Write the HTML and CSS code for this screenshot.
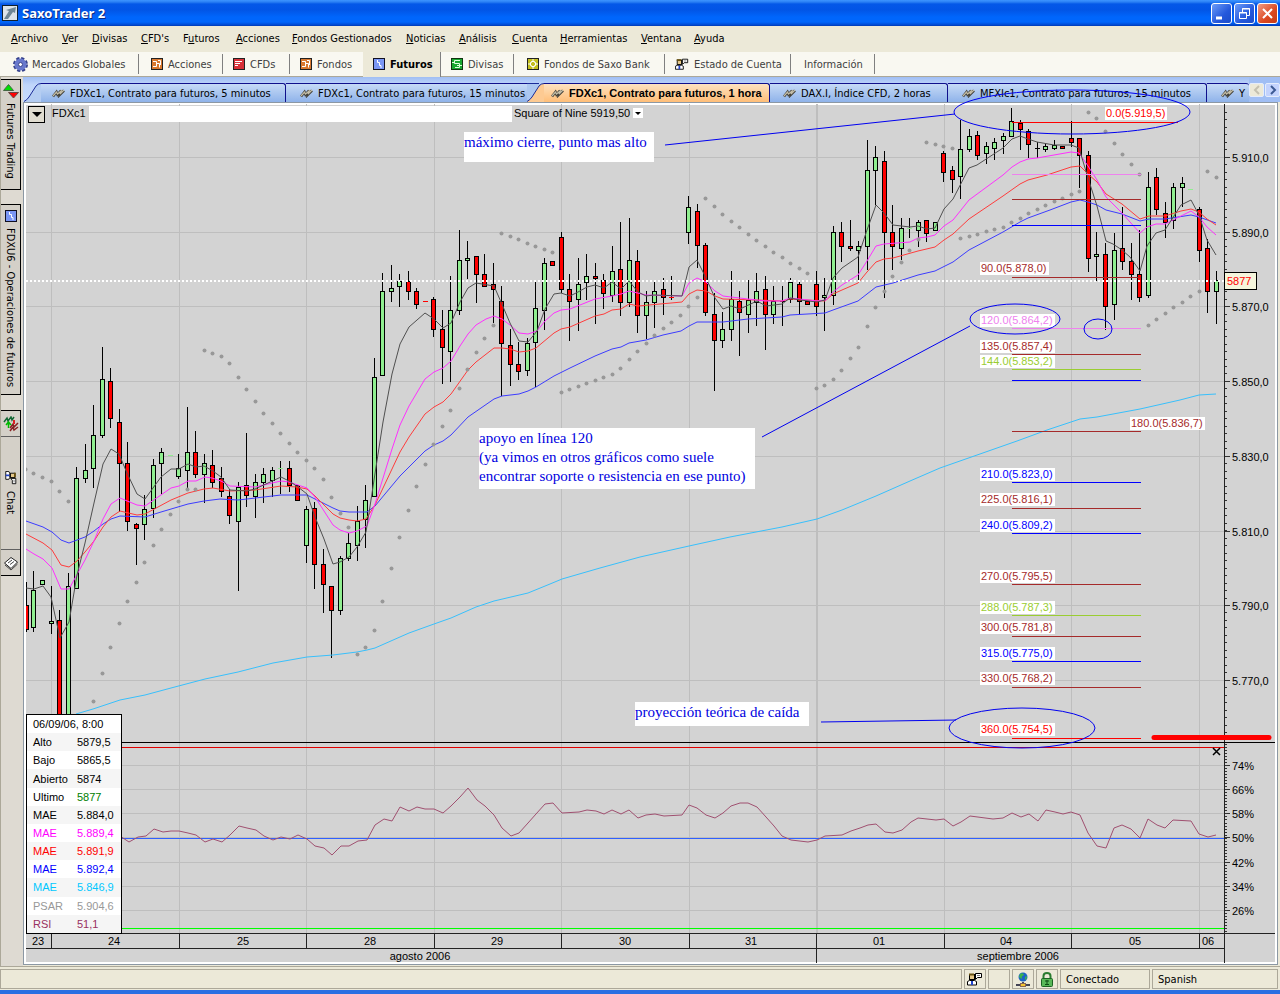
FILE: index.html
```
<!DOCTYPE html>
<html lang="es">
<head>
    <meta charset="UTF-8">
    <meta name="viewport" content="width=device-width, initial-scale=1.0">
    <title>SaxoTrader 2</title>
    <link rel="stylesheet" href="styles.css">
</head>
<body>
    <!-- Iconos compartidos -->
    <svg class="sprite" aria-hidden="true">
        <symbol id="i-chart" viewBox="0 0 13 9">
            <path d="M1 7.500L4.500 3L5.500 5.500L9 1.500L8 5.500L12 1.500" fill="none" stroke="#44423a" stroke-width="2.600"/>
            <path d="M1 7L4.500 3L5.500 5L9 2L8 5L12 1" fill="none" stroke="#c4bea8" stroke-width="1.200"/>
        </symbol>
        <symbol id="i-stock" viewBox="0 0 12 12">
            <rect x=".5" y=".5" width="11" height="11" fill="#d87830" stroke="#222"/>
            <path d="M2 3.500H5.500V8.500H2M5.500 5.500H8.500V9.500M7 2.500H9.500V7" fill="none" stroke="#fff"/>
        </symbol>
        <symbol id="i-future" viewBox="0 0 12 12">
            <rect x=".5" y=".5" width="11" height="11" fill="#7a96f4" stroke="#112"/>
            <path d="M4.500 2V4.500H6.500V7.500H8V10" fill="none" stroke="#fff"/>
        </symbol>
        <symbol id="i-person" viewBox="0 0 16 14">
            <path d="M8.500 1.500H14.500V5.500H10.500L8.500 7.500Z" fill="#fff" stroke="#000"/>
            <path d="M10 3.500H13" stroke="#777"/>
            <rect x="2.500" y="2.500" width="5" height="5" fill="#e6c98a" stroke="#000"/>
            <path d="M2 2.500H7" stroke="#6b5310" stroke-width="2"/>
            <path d="M.5 13V9.500L2.500 8.500H7.500L9.500 9.500V13Z" fill="#fff" stroke="#000"/>
            <path d="M5 9V13" stroke="#24c" stroke-width="2"/>
        </symbol>
    </svg>

    <header class="titlebar">
        <svg class="app-icon" viewBox="0 0 16 16">
            <rect x=".5" y=".5" width="15" height="15" fill="#dce4ea" stroke="#10202c"/>
            <path d="M2 14L7 6L4 5L14 2L13 8L11 7L6 14Z" fill="#6f8796"/>
        </svg>
        <h1>SaxoTrader 2</h1>
        <div class="win-buttons">
            <button class="win-btn" aria-label="Minimizar"><svg viewBox="0 0 19 19"><path d="M4 14H10" stroke="#fff" stroke-width="3"/></svg></button>
            <button class="win-btn" aria-label="Restaurar"><svg viewBox="0 0 19 19"><path d="M7.500 8V4.500H14.500V11.500H12M7 5H15" fill="none" stroke="#fff"/><path d="M4.500 8.500H11.500V14.500H4.500ZM4 9H12" fill="none" stroke="#fff"/></svg></button>
            <button class="win-btn win-close" aria-label="Cerrar"><svg viewBox="0 0 19 19"><path d="M5 5L14 14M14 5L5 14" stroke="#fff" stroke-width="2"/></svg></button>
        </div>
    </header>

    <nav class="menu" aria-label="Menú">
        <button><u>A</u>rchivo</button>
        <button><u>V</u>er</button>
        <button><u>D</u>ivisas</button>
        <button><u>C</u>FD's</button>
        <button>F<u>u</u>turos</button>
        <button><u>A</u>cciones</button>
        <button><u>F</u>ondos Gestionados</button>
        <button><u>N</u>oticias</button>
        <button><u>A</u>nálisis</button>
        <button><u>C</u>uenta</button>
        <button><u>H</u>erramientas</button>
        <button><u>V</u>entana</button>
        <button><u>A</u>yuda</button>
    </nav>

    <nav class="toolbar" aria-label="Módulos">
        <button>
            <svg width="15" height="15" viewBox="0 0 15 15">
                <circle cx="7.500" cy="7.500" r="6" fill="none" stroke="#34408c" stroke-width="3" stroke-dasharray="3 1.700"/>
                <circle cx="7.500" cy="7.500" r="4" fill="#e4e8fa" stroke="#6878cc" stroke-width="4"/>
                <circle cx="7.500" cy="7.500" r="2" fill="#fff" stroke="#34408c"/>
            </svg>Mercados Globales</button>
        <button><svg width="12" height="12"><use href="#i-stock"/></svg>Acciones</button>
        <button>
            <svg width="12" height="12" viewBox="0 0 12 12">
                <rect x=".5" y=".5" width="11" height="11" fill="#d83038" stroke="#222"/>
                <path d="M2 3.500H9M2 5.500H7M2 7.500H5" stroke="#fff"/>
            </svg>CFDs</button>
        <button><svg width="12" height="12"><use href="#i-stock"/></svg>Fondos</button>
        <button class="active"><svg width="12" height="12"><use href="#i-future"/></svg>Futuros</button>
        <button>
            <svg width="12" height="12" viewBox="0 0 12 12">
                <rect x=".5" y=".5" width="11" height="11" fill="#18a830" stroke="#131"/>
                <path d="M9 2.500H3.500V5.500H8.500V9.500H4M1 4.500H3M6 7.500H11" fill="none" stroke="#dfd"/>
            </svg>Divisas</button>
        <button>
            <svg width="12" height="12" viewBox="0 0 12 12">
                <rect x=".5" y=".5" width="11" height="11" fill="#c4c020" stroke="#222"/>
                <path d="M4.500 3.500H7.500V4.500H8.500V7.500H7.500V8.500H4.500V7.500H3.500V4.500H4.500ZM6 1V3M6 9V11M1 6H3M9 6H11" fill="none" stroke="#fff"/>
            </svg>Fondos de Saxo Bank</button>
        <button><svg width="14" height="14"><use href="#i-person"/></svg>Estado de Cuenta</button>
        <button>Información</button>
    </nav>

    <div class="workspace">
        <aside class="sidebar">
            <button class="side-tab side-trading">
                <svg width="16" height="16" viewBox="0 0 16 16">
                    <path d="M.5 7.500L5.500 1.500L10.500 7.500Z" fill="#00e000" stroke="#464"/>
                    <path d="M5.500 9.500L10.500 15L15.500 9.500Z" fill="#f00" stroke="#644"/>
                </svg>Futures Trading</button>
            <button class="side-tab side-orders"><svg width="12" height="12"><use href="#i-future"/></svg>FDXU6 - Operaciones de futuros</button>
            <div class="side-group">
                <button class="side-part side-signals" aria-label="Señales">
                    <svg width="16" height="16" viewBox="0 0 16 16">
                        <path d="M1 6L4 2L5 5L8 1L9 4L11 1" fill="none" stroke="#163" stroke-width="1.500"/>
                        <path d="M7 12L10 8L11 11L15 7M7 15L10 11L11 14L15 11" fill="none" stroke="#822" stroke-width="1.500"/>
                        <path d="M5.500 12V6M3 9L5.500 6L8 9" fill="none" stroke="#0b0" stroke-width="1.500"/>
                        <path d="M11 4V8" stroke="#d22" stroke-width="2"/>
                    </svg>
                </button>
                <button class="side-part side-chat"><svg class="turned" width="14" height="14"><use href="#i-person"/></svg>Chat</button>
                <button class="side-part side-news" aria-label="Noticias">
                    <svg width="16" height="16" viewBox="0 0 16 16">
                        <path d="M1.500 8L8 2.500L14.500 7L8 13.500Z" fill="#fff" stroke="#222"/>
                        <path d="M2 10L8 15L14.500 9M5 8L9 5M7 9.500L11 6.500" fill="none" stroke="#444"/>
                    </svg>
                </button>
            </div>
        </aside>

        <main class="main">
            <div class="tabs">
                <svg class="slant" viewBox="0 0 17 19" preserveAspectRatio="none">
                    <path d="M0 18.500Q3 17 5 14L12 3Q14 .5 17 .5V19H0Z" fill="#b4cdf2"/>
                    <path d="M0 18.500Q3 17 5 14L12 3Q14 .5 17 .5" fill="none" stroke="#1c2c98"/>
                </svg>
                <button class="tab tab-a"><svg width="13" height="9"><use href="#i-chart"/></svg>FDXc1, Contrato para futuros, 5 minutos</button>
                <button class="tab tab-b"><svg width="13" height="9"><use href="#i-chart"/></svg>FDXc1, Contrato para futuros, 15 minutos</button>
                <svg class="slant" viewBox="0 0 17 19" preserveAspectRatio="none">
                    <path d="M0 .5H15V19H0Z" fill="#acc7f0"/>
                    <path d="M0 18.500Q3 17 5 14L12 3Q14 .5 17 .5V19H0Z" fill="#fdca92"/>
                    <path d="M0 18.500Q3 17 5 14L12 3Q14 .5 17 .5M0 .5H12" fill="none" stroke="#1c2c98"/>
                </svg>
                <button class="tab tab-c active"><svg width="13" height="9"><use href="#i-chart"/></svg>FDXc1, Contrato para futuros, 1 hora</button>
                <button class="tab tab-d"><svg width="13" height="9"><use href="#i-chart"/></svg>DAX.I, Índice CFD, 2 horas</button>
                <button class="tab tab-e"><svg width="13" height="9"><use href="#i-chart"/></svg>MFXIc1, Contrato para futuros, 15 minutos</button>
                <button class="tab tab-f"><svg width="13" height="9"><use href="#i-chart"/></svg>Y</button>
                <div class="tab-scroll">
                    <button aria-label="Anterior" disabled><svg width="8" height="10" viewBox="0 0 8 10"><path d="M6 1L2 5L6 9" fill="none" stroke="#c4c0b0" stroke-width="2"/></svg></button>
                    <button aria-label="Siguiente"><svg width="8" height="10" viewBox="0 0 8 10"><path d="M2 1L6 5L2 9" fill="none" stroke="#3c5a94" stroke-width="2"/></svg></button>
                </div>
            </div>

            <section class="chart-frame">
                <svg class="chart" viewBox="26 104 1251 860" preserveAspectRatio="xMinYMin meet">
                    <g id="grid"></g>
                    <svg id="plot" x="26" y="104" width="1198" height="859" viewBox="26 104 1198 859"></svg>
                    <g id="overlay"></g>
                </svg>

                <div class="chart-head">
                    <button class="drop" aria-label="Opciones"><svg width="10" height="5" viewBox="0 0 10 5"><path d="M0 0H10L5 5Z"/></svg></button>
                    <label for="symbol">FDXc1</label>
                    <input id="symbol" type="text">
                    <select class="study" aria-label="Estudio"><option>Square of Nine 5919,50</option></select>
                    <span class="study-arrow"><svg width="6" height="3" viewBox="0 0 6 3"><path d="M0 0H6L3 3Z"/></svg></span>
                </div>

                <table class="legend">
                    <tr><th colspan="2">06/09/06, 8:00</th></tr>
                    <tr><td>Alto</td><td>5879,5</td></tr>
                    <tr><td>Bajo</td><td>5865,5</td></tr>
                    <tr><td>Abierto</td><td>5874</td></tr>
                    <tr><td>Ultimo</td><td class="up">5877</td></tr>
                    <tr><td>MAE</td><td>5.884,0</td></tr>
                    <tr class="magenta"><td>MAE</td><td>5.889,4</td></tr>
                    <tr class="red"><td>MAE</td><td>5.891,9</td></tr>
                    <tr class="blue"><td>MAE</td><td>5.892,4</td></tr>
                    <tr class="cyan"><td>MAE</td><td>5.846,9</td></tr>
                    <tr class="gray"><td>PSAR</td><td>5.904,6</td></tr>
                    <tr class="plum"><td>RSI</td><td>51,1</td></tr>
                </table>
            </section>
        </main>
    </div>

    <footer class="status">
        <span class="pane pane-main"></span>
        <span class="pane pane-icon"><svg width="16" height="14"><use href="#i-person"/></svg></span>
        <span class="pane pane-icon"></span>
        <span class="pane pane-icon">
            <svg width="14" height="15" viewBox="0 0 14 15">
                <circle cx="7" cy="5" r="4.500" fill="#1c64c8"/>
                <path d="M4 2Q7 0 8 3Q5 4 6 7Q4 6 3 5ZM9 5L11 4Q11 7 9 8Z" fill="#3cb44c"/>
                <path d="M7 10V12M0 13H14" stroke="#445" stroke-width="2"/>
                <rect x="4.500" y="11.500" width="5" height="3" fill="#f4c430" stroke="#865"/>
            </svg>
        </span>
        <span class="pane pane-icon">
            <svg width="14" height="15" viewBox="0 0 14 15">
                <path d="M3.500 7V4Q3.500 1 7 1T10.500 4V7" fill="none" stroke="#2a7c30" stroke-width="2"/>
                <rect x="1.500" y="6.500" width="11" height="8" rx="1" fill="#58b858" stroke="#1c6424"/>
                <path d="M7 8V13M5 9H9M5 12.500H9" stroke="#0c4c14"/>
            </svg>
        </span>
        <span class="pane pane-state">Conectado</span>
        <span class="pane pane-lang">Spanish</span>
    </footer>

    <script src="chart.js"></script>
</body>
</html>
```
FILE: styles.css
```
:root {
    --face: #ece9d8;
    --shadow: #aca899;
    --chart-bg: #d3d3d3;
    --ui-font: "DejaVu Sans Condensed", Tahoma, Verdana, sans-serif;
    --chart-font: "Liberation Sans", Arial, sans-serif;
}

* {
    box-sizing: border-box;
}

body {
    margin: 0;
    height: 100vh;
    display: flex;
    flex-direction: column;
    overflow: hidden;
    background: var(--face);
    border-bottom: 4px solid #2a6fe2;
    font-family: var(--ui-font);
    font-size: 11px;
    color: #000;
}

button {
    font: inherit;
    color: inherit;
    border: 0;
    padding: 0;
    background: none;
    white-space: nowrap;
}

svg {
    flex: none;
}

.sprite {
    position: absolute;
    width: 0;
    height: 0;
}

/* Barra de título */
.titlebar {
    flex: none;
    display: flex;
    align-items: center;
    height: 26px;
    padding: 0 2px;
    background: linear-gradient(#3d95ff 0, #2a80f4 2px, #0458e8 4px, #0255e6 10px, #0066fc 17px, #0066fc 22px, #0048d0 25px, #0038b0 26px);
}

.app-icon {
    width: 16px;
    height: 16px;
}

.titlebar h1 {
    flex: 1;
    margin: 0 0 0 4px;
    font-family: "Noto Sans", sans-serif;
    font-size: 13px;
    line-height: 24px;
    color: #fff;
    text-shadow: 1px 1px 0 #0a2a80;
}

.win-buttons {
    display: flex;
    gap: 2px;
}

.win-btn {
    width: 21px;
    height: 21px;
    border: 1px solid #fff;
    border-radius: 3px;
    background: linear-gradient(135deg, #6c9cf8, #2458dc 60%, #1c4cc8);
}

.win-btn svg {
    display: block;
}

.win-close {
    background: linear-gradient(135deg, #f09c84, #dc4820 60%, #c43c18);
}

/* Menú */
.menu {
    flex: none;
    display: flex;
    height: 26px;
    padding-left: 11px;
}

.menu button {
    text-align: left;
    width: 53px;
    padding-bottom: 2px;
}

.menu button:nth-child(1) { width: 51px; }
.menu button:nth-child(2) { width: 30px; }
.menu button:nth-child(3) { width: 49px; }
.menu button:nth-child(4) { width: 42px; }
.menu button:nth-child(6) { width: 56px; }
.menu button:nth-child(7) { width: 114px; }
.menu button:nth-child(10) { width: 48px; }
.menu button:nth-child(11) { width: 81px; }

/* Módulos */
.toolbar {
    flex: none;
    display: flex;
    align-items: center;
    height: 25px;
    background: #f9f8f1;
    border-bottom: 1px solid var(--shadow);
    color: #404040;
}

.toolbar button {
    display: flex;
    align-items: center;
    gap: 5px;
    width: 73px;
    height: 20px;
    padding-left: 10px;
    border-right: 1px solid #808080;
}

.toolbar button:nth-child(1) { width: 139px; padding-left: 13px; gap: 4px; }
.toolbar button:nth-child(2) { width: 84px; padding-left: 12px; }
.toolbar button:nth-child(3) { width: 67px; }
.toolbar button:nth-child(4) { border-right-color: transparent; }
.toolbar button:nth-child(7) { width: 151px; padding-left: 13px; }
.toolbar button:nth-child(8) { width: 126px; }
.toolbar button:nth-child(9) { width: 84px; padding-left: 13px; }

.toolbar .active {
    width: 78px;
    height: 25px;
    background: var(--face);
    color: #000;
    font-weight: bold;
}

/* Zona de trabajo */
.workspace {
    flex: 1;
    display: flex;
    min-height: 0;
}

.sidebar {
    flex: none;
    width: 23px;
    padding-top: 2px;
    border-left: 1px solid var(--shadow);
    background: #dedad2;
}

.side-tab,
.side-group {
    display: flex;
    width: 20px;
    background: #d4d0c8;
    border: 1px solid #000;
    border-left: 0;
}

.side-tab,
.side-part {
    writing-mode: vertical-rl;
    display: flex;
    align-items: center;
    gap: 6px;
}

.side-tab {
    padding-top: 5px;
}

.side-trading {
    height: 111px;
    margin-bottom: 14px;
    padding-top: 3px;
    gap: 4px;
}

.side-orders {
    height: 191px;
    margin-bottom: 15px;
}

.side-group {
    flex-direction: column;
    height: 166px;
}

.side-part {
    width: 19px;
    justify-content: center;
}

.side-signals {
    height: 25px;
}

.side-chat {
    flex: 1;
    border-top: 1px solid #606060;
    border-bottom: 1px solid #606060;
}

.side-news {
    height: 25px;
}

.turned {
    transform: rotate(90deg);
}

.main {
    flex: 1;
    min-width: 0;
    display: flex;
    flex-direction: column;
}

/* Pestañas de gráficos */
.tabs {
    flex: none;
    display: flex;
    align-items: flex-end;
    height: 25px;
    padding-left: 1px;
    background: linear-gradient(#a0bef4, #c0d6fa 8px, #c8dcfc);
}

.slant {
    width: 17px;
    height: 19px;
}

.tab {
    flex: none;
    display: flex;
    align-items: center;
    gap: 5px;
    height: 19px;
    padding-left: 11px;
    background: linear-gradient(#c6daf6, #8fb3ea);
    border-top: 1px solid #10108c;
    border-right: 1px solid #10108c;
    border-top-right-radius: 3px;
    overflow: hidden;
}

.tab.active {
    background: linear-gradient(#fde2c0, #ffbe78);
    font-family: var(--chart-font);
    font-weight: bold;
    padding-left: 7px;
}

.tab-a { width: 245px; }
.tab-b { width: 241px; padding-left: 14px; border-right: 0; border-radius: 0; }
.tab-c { width: 226px; }
.tab-d { width: 178px; padding-left: 13px; }
.tab-e { width: 259px; padding-left: 14px; }
.tab-f { width: 42px; padding-left: 14px; border-right: 0; }

.tab-scroll {
    flex: 1;
    align-self: stretch;
    display: flex;
    padding-top: 6px;
    gap: 1px;
    background: #a0bef4;
}

.tab-scroll button {
    display: flex;
    align-items: center;
    justify-content: center;
    width: 15px;
    height: 14px;
    background: #c3d3fd;
    border: 1px solid #e4ecfc;
    border-radius: 2px;
}

.tab-scroll button:disabled {
    background: #ece9d8;
}

/* Gráfico */
.chart-frame {
    position: relative;
    flex: 1;
    display: flex;
    min-height: 0;
    margin: 0 2px 1px 0;
    border: 1px solid #8c98a4;
    background: var(--chart-bg);
    box-shadow: inset 0 0 0 2px #fff;
    padding: 1px 0 0 2px;
}

.chart {
    flex: 1;
    width: 0;
    min-width: 0;
    height: 100%;
    overflow: visible;
    position: relative;
    pointer-events: none;
}

.chart text {
    font-family: var(--chart-font);
    font-size: 11px;
}

.chart .note {
    font-family: "Liberation Serif", serif;
    font-size: 15px;
    fill: #0000e0;
}

.chart .mid {
    text-anchor: middle;
}

.crisp {
    shape-rendering: crispEdges;
}

.average {
    fill: none;
    stroke-width: 1;
}

.ink {
    fill: none;
    stroke: #0000f0;
    stroke-width: 1;
}

.chart-head {
    position: absolute;
    left: 4px;
    top: 3px;
    display: flex;
    align-items: flex-start;
    font-family: var(--chart-font);
    line-height: 15px;
}

.chart-head .drop {
    display: flex;
    align-items: center;
    justify-content: center;
    width: 17px;
    height: 17px;
    background: #e0dcd0;
    border: 1px solid #000;
}

.chart-head label {
    width: 37px;
    margin-left: 7px;
}

.chart-head input {
    width: 423px;
    height: 16px;
    border: 0;
    padding: 0 2px;
    background: #fff;
    font: inherit;
}

.study {
    appearance: none;
    width: 119px;
    height: 15px;
    margin-left: 2px;
    padding: 0;
    border: 0;
    background: none;
    font: inherit;
    color: #000;
}

.study-arrow {
    display: flex;
    align-items: center;
    justify-content: center;
    width: 10px;
    height: 10px;
    margin-top: 2px;
    background: #fff;
}

.legend {
    position: absolute;
    left: 2px;
    bottom: 30px;
    width: 96px;
    height: 220px;
    border: 1px solid #000;
    border-spacing: 0;
    background: #fff;
    font-family: var(--chart-font);
    font-size: 11px;
    line-height: 18px;
}

.legend td,
.legend th {
    height: 18px;
    padding: 0 0 0 6px;
    text-align: left;
    font-weight: normal;
}

.legend td:first-child {
    width: 44px;
}

.legend tr:nth-child(even) {
    background: #f5f5f5;
}

.up { color: #008000; }
.magenta { color: #ff00ff; }
.red { color: #ff0000; }
.blue { color: #0000ff; }
.cyan { color: #00c8ff; }
.gray { color: #989898; }
.plum { color: #983060; }

/* Barra de estado */
.status {
    flex: none;
    display: flex;
    gap: 2px;
    height: 24px;
    padding: 2px 2px 1px 0;
    border-top: 1px solid var(--shadow);
}

.pane {
    display: flex;
    align-items: center;
    height: 20px;
    padding-left: 5px;
    border: 1px solid var(--shadow);
}

.pane-main {
    flex: 1;
}

.pane-icon {
    width: 22px;
    padding: 0;
    justify-content: center;
}

.pane-state {
    width: 90px;
}

.pane-lang {
    width: 126px;
}
```
FILE: chart.js
```
const SVG_NS = "http://www.w3.org/2000/svg";
let layer = document.getElementById("grid");

// Velas: [máximo, techo del cuerpo, base del cuerpo, mínimo, color]
const candles = [
    [582, 605, 629, 632, "r"], [571, 590, 627, 632, "g"], [580, 580, 584, 584, "g"], [586, 621, 623, 634, "g"],
    [610, 620, 730, 740, "r"], [573, 586, 730, 740, "g"], [467, 478, 588, 588, "g"], [444, 470, 478, 483, "g"],
    [405, 435, 468, 488, "g"], [347, 379, 435, 438, "g"], [368, 381, 418, 428, "r"], [409, 422, 463, 512, "r"],
    [442, 463, 521, 531, "r"], [523, 524, 528, 565, "r"], [495, 509, 524, 540, "g"], [459, 465, 508, 518, "g"],
    [448, 452, 463, 494, "g"], [455, 455, 455, 455, "g"], [454, 468, 476, 479, "g"], [407, 452, 470, 488, "g"],
    [431, 452, 474, 478, "r"], [454, 463, 474, 503, "g"], [450, 465, 482, 488, "r"], [467, 478, 491, 497, "r"],
    [489, 496, 515, 524, "r"], [482, 487, 521, 591, "g"], [433, 485, 495, 507, "r"], [474, 482, 496, 518, "g"],
    [468, 474, 482, 503, "g"], [467, 470, 480, 497, "g"], [461, 468, 468, 494, "g"], [461, 468, 485, 492, "r"],
    [485, 485, 500, 500, "r"], [506, 509, 545, 563, "g"], [502, 508, 564, 589, "r"], [549, 564, 584, 613, "r"],
    [586, 586, 610, 658, "r"], [556, 558, 610, 615, "g"], [533, 543, 558, 561, "g"], [506, 521, 545, 561, "g"],
    [485, 500, 519, 548, "g"], [358, 377, 496, 496, "g"], [273, 291, 375, 375, "g"], [265, 288, 291, 302, "g"],
    [274, 281, 286, 307, "g"], [271, 281, 291, 300, "r"], [288, 291, 304, 309, "r"], [301, 301, 301, 301, "r"],
    [297, 299, 329, 337, "r"], [310, 329, 347, 384, "r"], [276, 310, 351, 382, "g"], [230, 260, 310, 315, "g"],
    [241, 258, 260, 279, "g"], [256, 256, 274, 303, "r"], [254, 274, 286, 286, "r"], [263, 284, 289, 323, "r"],
    [286, 301, 343, 396, "r"], [329, 345, 364, 386, "r"], [342, 364, 371, 380, "r"], [338, 343, 370, 376, "g"],
    [282, 308, 342, 387, "g"], [258, 263, 310, 330, "g"], [261, 261, 265, 265, "r"], [232, 237, 289, 293, "r"],
    [274, 289, 301, 341, "r"], [258, 284, 299, 331, "g"], [254, 276, 282, 300, "g"], [263, 276, 278, 324, "r"],
    [274, 280, 293, 309, "r"], [246, 271, 295, 302, "g"], [222, 269, 302, 316, "r"], [218, 260, 302, 307, "g"],
    [250, 261, 315, 333, "r"], [291, 302, 315, 339, "g"], [282, 291, 302, 328, "g"], [278, 289, 297, 315, "r"],
    [276, 297, 297, 300, "r"], null, [196, 207, 232, 244, "g"], [204, 211, 245, 268, "r"],
    [243, 245, 312, 316, "r"], [293, 314, 340, 391, "r"], [312, 329, 340, 348, "g"], [271, 299, 329, 341, "g"],
    [291, 301, 312, 356, "r"], [280, 300, 314, 333, "g"], [273, 291, 302, 326, "g"], [276, 289, 314, 350, "r"],
    [286, 301, 314, 324, "g"], [286, 301, 301, 326, "k"], [278, 282, 299, 303, "g"], [282, 284, 301, 315, "r"],
    [301, 301, 304, 304, "r"], [271, 284, 306, 316, "r"], [278, 295, 297, 331, "g"], [226, 232, 295, 305, "g"],
    [222, 232, 246, 262, "r"], [220, 246, 248, 251, "r"], [241, 246, 250, 280, "g"], [140, 170, 246, 270, "g"],
    [146, 157, 170, 205, "g"], [151, 161, 232, 298, "r"], [205, 232, 246, 270, "r"], [218, 228, 248, 260, "g"],
    [218, 228, 228, 238, "g"], [220, 222, 230, 247, "g"], [220, 220, 233, 242, "r"], [222, 222, 230, 230, "g"],
    [151, 153, 172, 182, "r"], [166, 170, 179, 193, "r"], [120, 149, 176, 199, "g"], [129, 136, 149, 152, "g"],
    [131, 135, 155, 160, "r"], [142, 146, 153, 164, "g"], [138, 142, 148, 160, "g"], [133, 136, 140, 154, "g"],
    [108, 121, 136, 136, "g"], [120, 123, 129, 150, "r"], [129, 131, 144, 158, "r"], [142, 148, 148, 158, "k"],
    [144, 146, 149, 152, "g"], [140, 145, 148, 150, "g"], [146, 146, 148, 148, "r"], [121, 138, 142, 147, "r"],
    [138, 138, 155, 188, "r"], [151, 155, 258, 272, "r"], [232, 254, 256, 281, "g"], [243, 254, 306, 330, "r"],
    [233, 250, 304, 320, "g"], [207, 248, 261, 270, "r"], [243, 261, 274, 300, "r"], [230, 274, 297, 302, "r"],
    [172, 187, 295, 298, "g"], [168, 177, 209, 215, "r"], [202, 213, 222, 238, "r"], [183, 187, 220, 229, "g"],
    [177, 183, 187, 207, "g"], [189, 189, 189, 189, "g"], [207, 209, 250, 262, "r"], [239, 248, 291, 313, "r"],
    [271, 280, 291, 324, "g"]
];

// PSAR: un valor por vela (0 = sin punto)
const psar = [
    469, 473, 477, 481, 491, 501, 0, 0,
    701, 673, 647, 623, 601, 582, 562, 545, 529, 514, 501, 489, 489,
    350, 353, 356, 363, 377, 389, 401, 413, 423, 433, 443, 452, 460, 468, 479, 497, 513, 527,
    654, 647, 630, 601, 568, 537, 510, 486, 464, 444, 426, 410, 388, 369, 352, 338, 325,
    233, 236, 239, 243, 246, 249, 252,
    392, 389, 386, 383, 380, 377, 374, 368, 359, 351, 343, 335, 328, 322, 315, 306, 297,
    198, 206, 214, 221, 227, 234, 240, 246, 252, 257, 263, 268, 273,
    388, 385, 379, 370, 358, 347, 326, 307, 291, 276, 262, 250, 239,
    142, 144, 146, 148,
    238, 236, 234, 231, 229, 227, 222, 218, 213, 209, 205, 201, 198, 194, 191,
    112, 118, 131, 143, 154, 164, 174,
    325, 319, 313, 307, 302, 296, 291,
    171, 177
];

// Medias móviles y RSI
const averages = [
    ["#38c0fc", "76,714 93,709 111,703 120,700 145,695 171,688 205,679 238,672 273,663 307,657 333,655 357,652 367,650 375,648 409,633 434,624 451,618 476,607 494,601 528,593 550,584 562,579 600,568 640,557 689,546 730,537 782,527 817,519 842,510 876,496 910,481 940,468 1017,441 1047,430 1071,422 1080,419 1097,417 1140,409 1180,400 1199,395 1216,394"],
    ["#3c3cff", "26,521 43,527 52,532 61,540 69,543 85,537 94,531 103,524 111,519 120,516 145,517 161,512 188,504 204,501 220,499 238,500 247,499 281,495 307,495 315,499 333,508 340,511 349,512 367,512 375,506 400,476 409,467 425,451 434,445 443,441 451,435 468,417 494,399 502,396 519,394 528,391 536,387 554,376 570,368 595,356 612,349 621,347 629,343 646,340 663,335 681,331 689,326 697,322 723,322 748,319 782,317 790,315 825,313 833,310 858,301 876,287 893,283 918,275 935,271 953,262 969,250 1003,232 1020,222 1028,218 1050,210 1071,202 1080,200 1088,202 1097,205 1106,210 1122,214 1140,221 1149,219 1165,219 1191,215 1199,217 1216,223"],
    ["#ff3c3c", "26,534 43,543 52,550 61,565 69,567 77,561 85,552 94,541 103,527 111,517 120,511 137,515 145,514 171,500 188,493 204,489 213,488 230,491 255,490 281,486 297,487 307,489 315,496 333,514 340,518 349,520 357,521 366,519 375,505 392,469 400,452 409,437 425,414 434,407 443,402 451,394 468,370 476,362 494,348 502,348 510,349 519,352 528,351 536,348 554,333 561,329 570,327 595,316 604,314 612,310 621,309 629,304 638,306 682,302 689,294 697,290 706,291 715,296 723,299 757,300 782,301 790,299 825,301 833,294 842,290 858,283 867,272 876,262 884,259 893,258 918,251 935,247 944,240 953,234 969,219 1003,196 1020,184 1028,180 1047,175 1071,167 1080,166 1088,174 1097,182 1106,194 1122,204 1140,219 1149,216 1165,216 1181,211 1191,209 1199,212 1207,219 1216,225"],
    ["#ff30ff", "26,549 34,554 43,559 52,568 61,589 69,589 85,560 94,541 103,519 111,504 120,498 137,505 145,506 171,488 179,486 188,481 196,481 205,477 212,478 221,481 230,486 255,487 281,481 289,482 307,488 315,497 324,511 333,525 340,530 349,533 357,531 367,526 375,504 392,449 400,425 409,406 425,379 434,372 443,368 451,361 460,346 468,334 476,325 486,319 494,316 502,319 510,325 519,333 528,334 537,331 545,321 554,313 561,310 570,309 595,299 612,296 621,294 629,291 646,295 682,296 689,283 697,278 706,282 715,291 723,296 731,297 748,299 765,301 782,301 790,298 817,301 826,300 833,292 842,285 858,275 867,261 876,246 884,244 910,242 918,238 927,237 935,235 944,226 953,220 969,200 1003,175 1012,167 1020,162 1028,159 1037,158 1054,155 1071,152 1079,153 1088,166 1097,180 1106,197 1122,213 1130,222 1140,233 1147,227 1156,224 1165,224 1191,211 1199,217 1207,227 1216,235"],
    ["#505050", "26,588 34,589 43,586 51,597 60,638 69,622 77,575 85,543 94,503 103,464 111,449 119,454 127,473 137,494 145,499 161,477 171,469 179,469 188,464 196,467 204,466 213,471 221,477 230,490 247,491 255,489 281,477 289,481 298,487 307,494 315,517 324,539 333,564 340,562 349,557 357,547 366,532 369,513 374,480 383,422 392,374 400,344 409,327 425,313 434,319 443,328 451,323 460,302 468,288 476,283 494,286 501,302 510,323 519,341 528,342 537,331 545,309 554,294 561,293 570,296 578,292 587,287 595,285 604,288 612,282 621,289 629,281 638,292 646,296 654,295 682,296 689,267 697,260 706,278 715,298 723,309 731,306 740,309 757,301 766,306 782,304 790,298 800,300 817,302 825,300 833,278 842,268 858,257 867,230 876,205 884,213 893,225 910,227 918,226 927,229 935,228 944,209 953,199 969,168 977,165 1003,148 1012,139 1020,136 1028,139 1037,142 1054,145 1071,145 1079,148 1088,178 1097,206 1106,241 1113,244 1122,250 1130,257 1140,271 1147,246 1156,233 1165,230 1181,205 1191,200 1199,215 1207,240 1216,255"],
    ["#a05070", "120,836 129,842 138,837 146,836 154,829 163,832 171,831 179,831 188,833 196,835 205,842 213,839 222,842 230,835 239,826 247,828 256,830 264,836 273,840 281,837 290,839 298,835 307,839 315,846 324,848 332,855 341,846 349,846 358,841 367,840 375,825 384,819 392,821 400,807 409,811 417,807 425,809 434,809 443,813 451,806 460,797 468,788 477,800 485,806 494,815 502,828 511,836 519,833 528,823 536,814 545,804 553,803 562,813 579,812 587,810 596,811 604,814 612,810 621,814 629,810 638,818 646,815 655,814 664,816 682,815 689,805 697,808 706,815 715,818 723,813 731,806 740,803 748,803 757,807 766,817 774,826 782,836 791,840 808,842 817,840 825,836 842,835 851,831 860,828 868,825 876,824 885,832 893,833 902,830 911,822 918,818 936,820 944,819 953,826 961,822 970,816 993,819 1003,818 1012,813 1021,817 1029,814 1038,821 1046,810 1055,812 1063,814 1071,812 1080,815 1088,833 1097,846 1106,848 1114,828 1122,825 1131,829 1140,838 1148,819 1157,825 1165,828 1173,820 1191,821 1199,834 1208,837 1216,835"]
];

// Square of Nine: [y de la línea, color, etiqueta, x, y de la etiqueta, ancho]
const levels = [
    [122, "#ff0000", "0.0(5.919,5)", 1105, 107, 62],
    [174, "#ee82ee"],
    [199, "#a52a2a"],
    [225, "#0000ff"],
    [277, "#a52a2a", "90.0(5.878,0)", 980, 262, 69],
    [328, "#ee82ee", "120.0(5.864,2)", 980, 314, 75],
    [354, "#a52a2a", "135.0(5.857,4)", 980, 340, 75],
    [369, "#9acd32", "144.0(5.853,2)", 980, 355, 75],
    [380, "#0000ff"],
    [431, "#a52a2a", "180.0(5.836,7)", 1130, 417, 75],
    [482, "#0000ff", "210.0(5.823,0)", 980, 468, 75],
    [508, "#a52a2a", "225.0(5.816,1)", 980, 493, 75],
    [533, "#0000ff", "240.0(5.809,2)", 980, 519, 75],
    [584, "#a52a2a", "270.0(5.795,5)", 980, 570, 75],
    [615, "#9acd32", "288.0(5.787,3)", 980, 601, 75],
    [636, "#a52a2a", "300.0(5.781,8)", 980, 621, 75],
    [661, "#0000ff", "315.0(5.775,0)", 980, 647, 75],
    [687, "#a52a2a", "330.0(5.768,2)", 980, 672, 75],
    [738, "#ff0000", "360.0(5.754,5)", 980, 723, 75]
];

const days = [[51, "24", 114], [179, "25", 243], [306, "28", 370], [434, "29", 497], [561, "30", 625],
              [689, "31", 751], [816, "01", 879], [944, "04", 1006], [1071, "05", 1135], [1199, "06", 1208]];

function add(tag, attrs, text) {
    const el = document.createElementNS(SVG_NS, tag);
    for (const name in attrs) {
        el.setAttribute(name, attrs[name]);
    }
    if (text) el.textContent = text;
    layer.appendChild(el);
}

function line(x1, y1, x2, y2, color) {
    add("line", { x1, y1, x2, y2, stroke: color, class: "crisp" });
}

function barX(i) {
    return Math.floor(51 + (i - 3) * 8.504) + 0.5;
}

function drawGrid() {
    for (let i = 0; i < 8; i++) {
        const y = Math.round(157 + i * 74.7) + 0.5;
        line(26, y, 1224, y, "#bebebe");
        line(1224, y, 1230, y, "#333");
        add("text", { x: 1232, y: y + 4 }, "5." + (910 - i * 20) + ",0");
    }
    for (let i = 0; i < 7; i++) {
        const y = Math.round(765 + i * 24.15) + 0.5;
        line(26, y, 1224, y, "#bebebe");
        line(1224, y, 1230, y, "#333");
        add("text", { x: 1232, y: y + 4 }, (74 - i * 8) + "%");
    }
    for (let y = 112.5; y < 740; y += 7.47) {
        line(1224, Math.floor(y) + 0.5, 1227, Math.floor(y) + 0.5, "#333");
    }
    for (let y = 744.5; y < 933; y += 3.02) {
        line(1224, Math.floor(y) + 0.5, 1227, Math.floor(y) + 0.5, "#333");
    }
    days.forEach(([x, name, labelX]) => {
        line(x + 0.5, 104, x + 0.5, 933, "#bebebe");
        line(x + 0.5, 933, x + 0.5, x === 816 ? 963 : 948, "#222");
        add("text", { x: labelX, y: 945, class: "mid" }, name);
    });
    line(817.5, 104, 817.5, 933, "#bebebe");
    add("text", { x: 38, y: 945, class: "mid" }, "23");
    add("text", { x: 420, y: 960, class: "mid" }, "agosto 2006");
    add("text", { x: 1018, y: 960, class: "mid" }, "septiembre 2006");
    line(1224.5, 104, 1224.5, 963, "#222");
    line(26, 933.5, 1275, 933.5, "#222");
    line(26, 948.5, 1224, 948.5, "#222");
    line(26, 742.5, 1275, 742.5, "#000");
    line(26, 747.5, 1224, 747.5, "#e00000");
    line(26, 838.5, 1224, 838.5, "#3060ff");
    line(26, 928.5, 1224, 928.5, "#00ff00");
}

function drawCandles() {
    const fill = { r: "#ff0000", g: "#90ee90", k: "#000000" };
    candles.forEach((c, i) => {
        if (!c) return;
        const [high, top, bottom, low, color] = c;
        const x = Math.max(barX(i), 26.5);
        if (low > high) line(x, high, x, low, "#000");
        if (top === bottom) {
            line(x - 2.5, top + 0.5, x + 2.5, top + 0.5, fill[color]);
        } else {
            add("rect", { x: x - 2, y: top + 0.5, width: 4, height: bottom - top, fill: fill[color], stroke: "#000", class: "crisp" });
        }
    });
}

function drawIndicators() {
    averages.forEach(([color, points]) => add("polyline", { points, stroke: color, class: "average" }));
    psar.forEach((y, i) => {
        if (y) add("circle", { cx: barX(i), cy: y + 0.5, r: 2, fill: "#989898" });
    });
    // Último precio
    add("line", { x1: 26, y1: 281, x2: 1224, y2: 281, stroke: "#fff", "stroke-width": 2, "stroke-dasharray": "2 2", class: "crisp" });
}

function drawLevels() {
    levels.forEach(([y, color, label, x, top, width]) => {
        line(1012, y + 0.5, y === 122 ? 1178 : 1141, y + 0.5, color);
        if (label) {
            add("rect", { x, y: top, width, height: 13, fill: "#fff" });
            add("text", { x: x + 1, y: top + 10, fill: color }, label);
        }
    });
    add("rect", { x: 1224.5, y: 272.5, width: 32, height: 17, fill: "#f5f5dc", stroke: "#000" });
    add("text", { x: 1227, y: 285, fill: "#ff0000" }, "5877");
    add("path", { d: "M1213 748L1220 755M1220 748L1213 755", stroke: "#000", "stroke-width": 1.5 });
}

function drawNotes() {
    const notes = [
        [464, 132, 190, 30, ["máximo cierre, punto mas alto"]],
        [479, 428, 276, 61, ["apoyo en línea 120", "(ya vimos en otros gráficos como suele", "encontrar soporte o resistencia en ese punto)"]],
        [635, 702, 174, 24, ["proyección teórica de caída"]]
    ];
    notes.forEach(([x, y, width, height, lines]) => {
        add("rect", { x, y, width, height, fill: "#fff" });
        lines.forEach((text, n) => add("text", { x, y: y + 15 + n * 19, class: "note" }, text));
    });
    [[1072, 112, 118, 22], [1015, 319, 45, 15], [1098, 329, 14, 10], [1022, 728, 73, 20]].forEach(([cx, cy, rx, ry]) => {
        add("ellipse", { cx, cy, rx, ry, class: "ink" });
    });
    add("path", { d: "M665 145L955 114M762 437L970 326M821 722L956 720", class: "ink" });
    add("path", { d: "M1154 737.5H1269", stroke: "#ff0000", "stroke-width": 5, "stroke-linecap": "round" });
}

drawGrid();
layer = document.getElementById("plot");
drawCandles();
drawIndicators();
layer = document.getElementById("overlay");
drawLevels();
drawNotes();
```
